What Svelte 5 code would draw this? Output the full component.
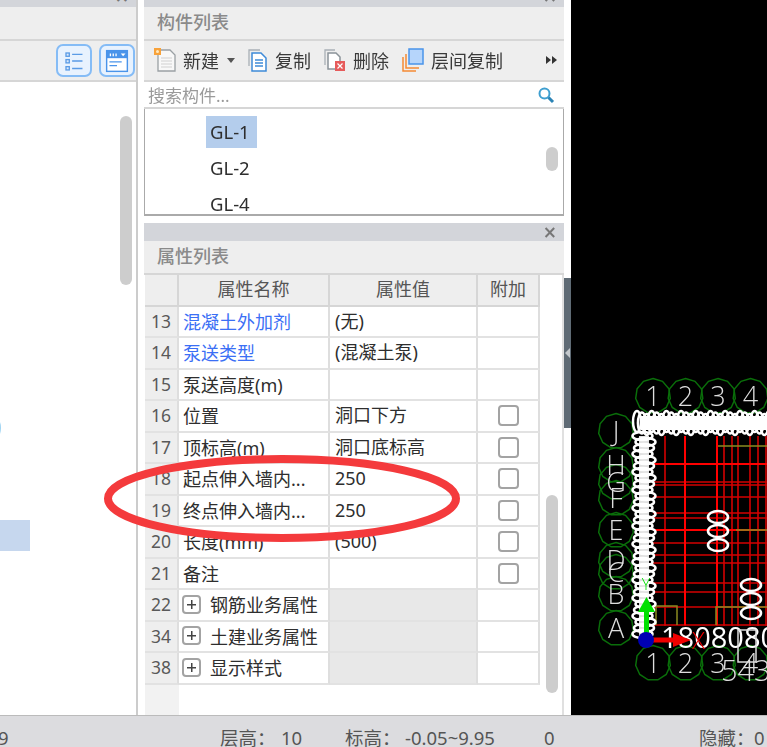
<script>
  const rows = [
    { n: 13, name: '混凝土外加剂', val: '(无)', link: true },
    { n: 14, name: '泵送类型', val: '(混凝土泵)', link: true },
    { n: 15, name: '泵送高度(m)', val: '' },
    { n: 16, name: '位置', val: '洞口下方', check: true },
    { n: 17, name: '顶标高(m)', val: '洞口底标高', check: true },
    { n: 18, name: '起点伸入墙内...', val: '250', check: true },
    { n: 19, name: '终点伸入墙内...', val: '250', check: true },
    { n: 20, name: '长度(mm)', val: '(500)', check: true },
    { n: 21, name: '备注', val: '', check: true },
    { n: 22, name: '钢筋业务属性', group: true },
    { n: 34, name: '土建业务属性', group: true },
    { n: 38, name: '显示样式', group: true }
  ];
  const top = ['1', '2', '3', '4'].map((t, i) => ({ t, x: 652 + i * 32.5, y: 396 }));
  const bottom = ['1', '2', '3', '4'].map((t, i) => ({ t, x: 652 + i * 32.5, y: 663 }));
  const side = [['J', 431], ['H', 465], ['G', 482], ['F', 498], ['E', 530], ['D', 560], ['C', 572], ['B', 594], ['A', 628]].map(([t, y]) => ({ t, x: 615, y }));
  const bubbles = [...top, ...bottom, ...side];
  const vLines = [664, 684, 716, 723, 731, 737, 749, 757, 765];
  const hLines = [464, 482, 485, 497, 513, 518, 530, 543, 555, 563, 583, 592, 607, 625];
  const topOvals = Array.from({ length: 28 }, (_, i) => ({ x: 636 + i * 4.9, y: 423 + (i % 3) * 1.5 - 1.5 }));
  const sideOvals = Array.from({ length: 34 }, (_, i) => ({ x: 643 + ((i * 5) % 3) * 1.5 - 1.5, y: 436 + i * 6 }));
  const heptagon = (cx, cy, r) =>
    Array.from({ length: 11 }, (_, i) => {
      const a = (i / 11) * Math.PI * 2 - Math.PI / 2;
      return `${(cx + r * Math.cos(a)).toFixed(1)},${(cy + r * Math.sin(a)).toFixed(1)}`;
    }).join(' ');
</script>

<div class="page">
  <div class="main">
    <section class="panel left">
      <div class="strip"><span class="close">×</span></div>
      <div class="title"></div>
      <div class="toolbar end">
        <button class="mode" aria-label="list">
          <svg width="34" height="30" viewBox="0 0 34 30">
            <g fill="#dbe9fb" stroke="#5a9be6" stroke-width="1.4">
              <rect x="8.500" y="6.500" width="3.500" height="3.500" /><rect x="8.500" y="13.500" width="3.500" height="3.500" /><rect x="8.500" y="21" width="3.500" height="3.500" />
            </g>
            <path d="M15 8h11M15 15h11M15 23h11" stroke="#5a9be6" stroke-width="1.4" />
          </svg>
        </button>
        <button class="mode" aria-label="form">
          <svg width="34" height="30" viewBox="0 0 34 30">
            <rect x="6" y="4" width="22" height="22" fill="#fff" stroke="#4a94ea" stroke-width="1.500" />
            <rect x="6" y="4" width="22" height="8" fill="#4a94ea" />
            <path d="M10 7v3M13 7v3M16 7v3" stroke="#fff" stroke-width="1.400" />
            <path d="M21 7h5l-2.500 3z" fill="#fff" />
            <path d="M9 16h13M9 20h8" stroke="#4a94ea" stroke-width="1.400" />
          </svg>
        </button>
      </div>
      <div class="tree">
        <div class="dot"></div>
        <div class="selection"></div>
        <div class="thumb tree-thumb"></div>
      </div>
    </section>

    <div class="column">
      <section class="panel list-panel">
        <div class="strip"><span class="close">×</span></div>
        <div class="title">构件列表</div>
        <div class="toolbar">
          <span class="tool first">
            <svg width="26" height="26" viewBox="0 0 26 26">
              <path d="M5 3h12l5 5v16H5z" fill="#f8f8f8" stroke="#9aa0a4" stroke-width="1.300" />
              <path d="M8 11h11M8 14h11M8 17h11M8 20h11" stroke="#d0d0d0" />
              <path d="M1 1h7v7H1z" fill="#f8a23a" />
              <circle cx="4.500" cy="4.500" r="1.500" fill="#ffe9bd" />
            </svg>
            新建<i class="caret"></i>
          </span>
          <span class="tool copy">
            <svg width="24" height="26" viewBox="0 0 24 26">
              <path d="M3 19V3h11" fill="none" stroke="#a9b0b6" stroke-width="1.300" />
              <path d="M6 6h9l5 5v13H6z" fill="#fff" stroke="#3e8ad8" stroke-width="1.500" />
              <path d="M9 13h8M9 16h8M9 19h8" stroke="#3e8ad8" stroke-width="1.300" />
            </svg>
            复制
          </span>
          <span class="tool del">
            <svg width="24" height="26" viewBox="0 0 24 26">
              <path d="M2 18V3h10" fill="none" stroke="#a9b0b6" stroke-width="1.300" />
              <path d="M5 6h8l4 4v12H5z" fill="#fff" stroke="#8b9399" stroke-width="1.500" />
              <rect x="12" y="14" width="10" height="10" fill="#e65b5b" />
              <path d="M14.500 16.500l5 5M19.500 16.500l-5 5" stroke="#fff" stroke-width="1.200" />
            </svg>
            删除
          </span>
          <span class="tool floor">
            <svg width="24" height="26" viewBox="0 0 24 26">
              <path d="M2 10v14h13M5 7v14h13" fill="none" stroke="#f58a35" stroke-width="1.500" />
              <rect x="8" y="2" width="14" height="15" fill="#b6d5fb" stroke="#4a94ea" stroke-width="1.500" />
            </svg>
            层间复制
          </span>
          <span class="more">
            <svg width="12" height="10" viewBox="0 0 12 10"><path d="M0 1l5 4-5 4zM6 1l5 4-5 4z" fill="#333" /></svg>
          </span>
        </div>
        <div class="search">
          <span>搜索构件...</span>
          <svg width="18" height="18" viewBox="0 0 18 18">
            <circle cx="7.500" cy="7.500" r="5" fill="#fff" stroke="#3f9fd0" stroke-width="2" />
            <path d="M11.500 11.500l4.500 4.500" stroke="#2b83b5" stroke-width="3" />
          </svg>
        </div>
        <div class="items">
          <div class="item"><span class="sel">GL-1</span></div>
          <div class="item"><span>GL-2</span></div>
          <div class="item"><span>GL-4</span></div>
          <div class="thumb item-thumb"></div>
        </div>
      </section>

      <section class="panel props">
        <div class="strip tall"><span class="close">×</span></div>
        <div class="title">属性列表</div>
        <div class="table">
          <div class="row head">
            <div class="c num"></div>
            <div class="c center">属性名称</div>
            <div class="c center">属性值</div>
            <div class="c center">附加</div>
          </div>
          {#each rows as r}
            <div class="row">
              <div class="c num">{r.n}</div>
              <div class="c name" class:link={r.link}>
                {#if r.group}<i class="plus"></i><span class="gname">{r.name}</span>{:else}{r.name}{/if}
              </div>
              <div class="c val" class:shade={r.group}>{r.val ?? ''}</div>
              <div class="c box">{#if r.check}<i class="check"></i>{/if}</div>
            </div>
          {/each}
          <div class="rest"><div class="rest-num"></div></div>
          <div class="thumb prop-thumb"></div>
        </div>
      </section>
    </div>

    <div class="splitter">
      <div class="grip"><i></i></div>
    </div>

    <div class="canvas">
      <svg width="197" height="715" viewBox="570 0 197 715">
        <g stroke="#d40000" stroke-width="1.600">
          {#each vLines as x}<line x1={x} y1="436" x2={x} y2="626" />{/each}
          {#each hLines as y}<line x1="652" y1={y} x2="767" y2={y} />{/each}
        </g>
        <g stroke="#ff0000" stroke-width="2">
          <line x1="716" y1="436" x2="716" y2="625" /><line x1="684" y1="436" x2="684" y2="625" />
          <line x1="652" y1="464" x2="767" y2="464" /><line x1="652" y1="530" x2="767" y2="530" />
        </g>
        <g fill="none" stroke="#8a8a20" stroke-width="1.500">
          <path d="M717 446h50M735 530h32" />
          <path d="M655 625v-19h21v19M715 625v-18h52" />
        </g>
        {#each bubbles as b}
          <polygon points={heptagon(b.x, b.y, 17.500)} fill="none" stroke="#0a6e0a" stroke-width="1.500" />
        {/each}
        {#each bubbles as b}
          <text x={b.x} y={b.y + 10} class="axis">{b.t}</text>
        {/each}
        <g fill="#fff" stroke="#fff">
          <rect x="640" y="416" width="127" height="14" stroke="none" />
          <rect x="638" y="436" width="10" height="205" stroke="none" opacity="0.88" />
        </g>
        <g fill="none" stroke="#fff" stroke-width="2.500">
          {#each topOvals as o}<ellipse cx={o.x} cy={o.y} rx="4" ry="10.500" />{/each}
          {#each sideOvals as o}<ellipse cx={o.x} cy={o.y} rx="10" ry="4" />{/each}
          <g stroke-width="2.600">
            <ellipse cx="717" cy="517" rx="10" ry="6" /><ellipse cx="717" cy="531" rx="10" ry="6" /><ellipse cx="717" cy="545" rx="10" ry="6" />
            <ellipse cx="750" cy="585" rx="10" ry="6" /><ellipse cx="750" cy="599" rx="10" ry="6" /><ellipse cx="750" cy="613" rx="10" ry="6" />
          </g>
        </g>
        <text x="660" y="648" class="dim">1808080808</text>
        <text x="720" y="681" class="dim small">543</text>
        <rect x="737" y="630" width="18" height="32" fill="none" stroke="#ddd" stroke-width="1.500" />
        <path d="M645.500 634v-24" stroke="#00e000" stroke-width="5" />
        <path d="M637 612l8.500-15 8.500 15z" fill="#00e000" />
        <text x="645" y="590" class="y">Y</text>
        <path d="M652 640h24" stroke="#f00000" stroke-width="5" />
        <path d="M672 633l18 7-18 7z" fill="#f00000" />
        <text x="691" y="649" class="x">X</text>
        <circle cx="645" cy="640" r="8" fill="#0000b4" />
      </svg>
    </div>
  </div>

  <footer class="status">
    <span class="s1">9</span>
    <span class="s2">层高：</span>
    <span class="s3">10</span>
    <span class="s4">标高：</span>
    <span class="s5">-0.05~9.95</span>
    <span class="s6">0</span>
    <span class="s7">隐藏：</span>
    <span class="s8">0</span>
  </footer>

  <svg class="mark" width="767" height="747" viewBox="0 0 767 747">
    <ellipse cx="282" cy="498.500" rx="174" ry="39.500" fill="none" stroke="#f43a3c" stroke-width="8" />
  </svg>
</div>

<style>
  :global(body) { margin: 0; background: #fff; }
  .page {
    position: relative;
    width: 767px;
    height: 747px;
    overflow: hidden;
    font-family: "Noto Sans", "Noto Sans CJK SC", sans-serif;
    font-size: 18px;
    color: #2e2e2e;
    display: flex;
    flex-direction: column;
    filter: blur(0.45px);
  }
  .main { display: flex; height: 715px; flex: none; }
  .panel { display: flex; flex-direction: column; background: #fff; box-sizing: border-box; }
  .left { width: 138px; border-right: 2px solid #ccc; flex: none; }
  .column { width: 420px; margin-left: 6px; flex: none; display: flex; flex-direction: column; }
  .strip { height: 7px; background: #d3d5da; position: relative; flex: none; overflow: hidden; }
  .strip.tall { height: 18px; }
  .close {
    position: absolute; right: 7px; bottom: 4px; line-height: 14px; font-size: 17px; font-weight: 700; color: #777;
    font-family: "DejaVu Sans", sans-serif;
  }
  .left .close { right: 7px; }
  .strip.tall .close { right: 7px; bottom: 2px; }
  .title {
    height: 32px; background: #eee; border-bottom: 2px solid #d6d6d6; flex: none;
    font-size: 18px; line-height: 30px; color: #8a8a8a; padding-left: 13px; font-weight: 500;
  }
  .toolbar {
    height: 41px; background: #eee; border-bottom: 2px solid #d6d6d6; flex: none; box-sizing: border-box;
    display: flex; align-items: center; padding: 0 0 1px 9px;
  }
  .toolbar.end { justify-content: flex-end; padding: 0 1px 0 0; gap: 7px; }
  .left .title { padding: 0; }
  .mode {
    width: 36px; height: 33px; padding: 0; border: 2px solid #85bcf6; border-radius: 7px; background: #e8f2fe;
    display: flex; align-items: center; justify-content: center; box-sizing: border-box;
  }
  .tree { position: relative; flex: 1; }
  .dot { position: absolute; left: -7px; top: 337px; width: 8px; height: 18px; border-radius: 50%; background: #9fd4f2; }
  .selection { position: absolute; left: 0; top: 438px; width: 30px; height: 31px; background: #c6d7ee; }
  .thumb { position: absolute; background: #cdcdcd; border-radius: 6px; width: 12px; }
  .tree-thumb { left: 120px; top: 34px; height: 169px; }

  .tool { display: inline-flex; align-items: center; gap: 4px; font-size: 18px; color: #3a3a3a; white-space: nowrap; }
  .caret { width: 0; height: 0; border: 4.500px solid transparent; border-top: 5px solid #555; border-bottom: 0; margin-left: 4px; }
  .copy { margin-left: 11px; gap: 5px; }
  .del { margin-left: 12px; gap: 6px; }
  .floor { margin-left: 12px; gap: 6px; }
  .more { margin-left: auto; margin-right: 6px; display: flex; }
  .search {
    height: 27px; border-bottom: 2px solid #d6d6d6; flex: none; display: flex; align-items: center; justify-content: space-between;
    box-sizing: border-box; padding: 0 9px 0 4px; font-size: 17px; color: #9a9a9a;
  }
  .items {
    position: relative; height: 107px; flex: none; box-sizing: border-box; overflow: hidden;
    border-style: solid; border-color: #aaa; border-width: 0 1px 2px 1px; padding-top: 5px;
  }
  .item { height: 36px; padding-left: 61px; line-height: 36px; font-size: 18.500px; color: #2e2e2e; }
  .item span { display: inline-block; padding: 0 7px 0 4px; height: 32px; line-height: 31px; }
  .sel { background: #b4cdec; }
  .item-thumb { left: 401px; top: 38px; height: 24px; }

  .props { margin-top: 7px; flex: 1; min-height: 0; }
  .table { position: relative; flex: 1; padding-left: 1px; border-right: 2px solid #e0e0e0; border-bottom: 2px solid #ccc; }
  .row {
    display: grid; grid-template-columns: 34px 151px 148px 62px; height: 31.500px;
  }
  .c {
    box-sizing: border-box; border-right: 2px solid #dedede; border-bottom: 2px solid #e2e2e2; line-height: 28px;
    font-size: 18px; white-space: nowrap; overflow: hidden; color: #2e2e2e;
  }
  .head .c { background: #eee; color: #555; border-color: #d6d6d6; }
  .center { text-align: center; }
  .num { background: #eee; text-align: center; color: #595959; font-size: 17.500px; }
  .name { padding-left: 4px; display: flex; align-items: center; line-height: normal; padding-bottom: 1px; }
  .val { padding-left: 5px; }
  .link { color: #3b6ff5; }
  .shade { background: #e8e8e8; }
  .box { display: flex; align-items: center; justify-content: center; }
  .check { width: 21px; height: 21px; box-sizing: border-box; border: 2px solid #a3a3a3; border-radius: 4px; background: #fff; }
  .plus {
    width: 19px; height: 19px; box-sizing: border-box; border: 2px solid #a3a3a3; border-radius: 4px; flex: none; margin-left: -1px;
    background:
      linear-gradient(#444, #444) center / 9px 1.500px no-repeat,
      linear-gradient(#444, #444) center / 1.500px 9px no-repeat;
  }
  .gname { margin-left: 9px; }
  .rest { height: 31px; }
  .rest-num { width: 34px; height: 100%; background: #f2f2f2; }
  .prop-thumb { left: 402px; top: 220px; height: 198px; }

  .splitter { width: 7px; flex: none; position: relative; }
  .grip { position: absolute; left: 0; top: 278px; width: 7px; height: 150px; background: #5f6b75; }
  .grip i { position: absolute; left: 1px; top: 70px; border: 5px solid transparent; border-right: 5px solid #c4c9cd; border-left: 0; }
  .canvas { flex: 1; background: #000; overflow: hidden; }
  .canvas svg { display: block; }
  .axis { font: 300 27px "Open Sans", sans-serif; fill: #ddd; text-anchor: middle; }
  .dim { font: 400 29px "Open Sans", sans-serif; fill: #fff; }
  .small { fill: #ddd; font-weight: 300; }
  .y { font: 300 16px "Open Sans", sans-serif; fill: #00e000; text-anchor: middle; }
  .x { font: 300 24px "Open Sans", sans-serif; fill: #f00000; }

  .status {
    position: relative; flex: 1; background: #dcdcdf; color: #555; font-size: 18.500px; border-top: 1px solid #bbb; box-sizing: border-box;
  }
  .status span { position: absolute; top: 7px; line-height: 30px; white-space: nowrap; }
  .s1 { left: -2px; } .s2 { left: 220px; } .s3 { left: 281px; } .s4 { left: 345px; }
  .s5 { left: 405px; } .s6 { left: 544px; } .s7 { left: 699px; } .s8 { left: 754px; }

  .mark { position: absolute; inset: 0; pointer-events: none; }
</style>
